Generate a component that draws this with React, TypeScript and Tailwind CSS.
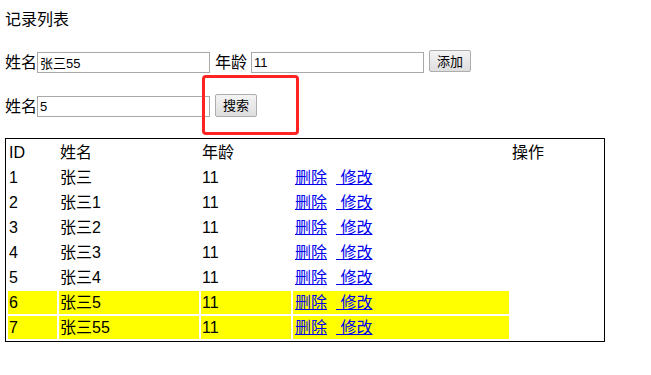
import React from "react";

const rows = [
  { id: 1, name: "张三", age: 11, hl: false },
  { id: 2, name: "张三1", age: 11, hl: false },
  { id: 3, name: "张三2", age: 11, hl: false },
  { id: 4, name: "张三3", age: 11, hl: false },
  { id: 5, name: "张三4", age: 11, hl: false },
  { id: 6, name: "张三5", age: 11, hl: true },
  { id: 7, name: "张三55", age: 11, hl: true },
];

const font = { fontFamily: '"Liberation Sans","Noto Sans CJK SC",sans-serif' };

function Input({ value, w }: { value: string; w: string }) {
  return (
    <input
      readOnly
      value={value}
      className={`${w} h-[21px] border border-[#a9a9a9] bg-white px-[2px] text-[13px] text-black outline-none`}
      style={font}
    />
  );
}

function Btn({ label, h }: { label: string; h: string }) {
  return (
    <button
      className={`w-[42px] ${h} border border-[#adadad] rounded-[2px] bg-gradient-to-b from-[#f4f4f4] to-[#dedede] text-[13px] leading-none text-black`}
      style={font}
    >
      {label}
    </button>
  );
}

export default function App() {
  return (
    <div className="relative w-[651px] h-[375px] bg-white text-black px-[5px] pt-[9px]" style={font}>
      <div className="h-[21px] text-[16px] leading-[21px]">记录列表</div>

      <div className="mt-[20px] flex items-end h-[23px] text-[16px]">
        <span className="w-[32px] leading-[21px]">姓名</span>
        <Input value="张三55" w="w-[173px]" />
        <span className="ml-[5px] w-[32px] leading-[21px]">年龄</span>
        <span className="w-[4px]" />
        <Input value="11" w="w-[173px]" />
        <span className="w-[5px]" />
        <Btn label="添加" h="h-[22px] mb-[1px]" />
      </div>

      <div className="mt-[21px] flex items-end h-[23px] text-[16px]">
        <span className="w-[32px] leading-[21px]">姓名</span>
        <Input value="5" w="w-[173px]" />
        <span className="w-[5px]" />
        <Btn label="搜索" h="h-[23px]" />
      </div>

      <table className="mt-[21px] w-[600px] table-fixed border-separate border-spacing-[2px] border border-black text-[16px] leading-[21px]">
        <colgroup>
          <col className="w-[49px]" />
          <col className="w-[140px]" />
          <col className="w-[90px]" />
          <col className="w-[216px]" />
          <col className="w-[91px]" />
        </colgroup>
        <tbody>
          <tr>
            <td className="p-[1px]">ID</td>
            <td className="p-[1px]">姓名</td>
            <td className="p-[1px]">年龄</td>
            <td className="p-[1px]"></td>
            <td className="p-[1px]">操作</td>
          </tr>
          {rows.map((r) => {
            const bg = r.hl ? "bg-[#ffff00]" : "";
            return (
              <tr key={r.id}>
                <td className={`p-[1px] ${bg}`}>{r.id}</td>
                <td className={`p-[1px] ${bg}`}>{r.name}</td>
                <td className={`p-[1px] ${bg}`}>{r.age}</td>
                <td className={`p-[1px] pl-[2px] whitespace-nowrap ${bg}`}>
                  <a href="#" className="text-[#0000ee] underline">删除</a>
                  <a href="#" className="ml-[9px] text-[#0000ee] underline">{"\u00a0修改"}</a>
                </td>
              </tr>
            );
          })}
        </tbody>
      </table>

      <div className="absolute left-[202px] top-[75px] w-[97px] h-[60px] border-[3px] border-[#ff2424] rounded-[4px]" />
    </div>
  );
}
